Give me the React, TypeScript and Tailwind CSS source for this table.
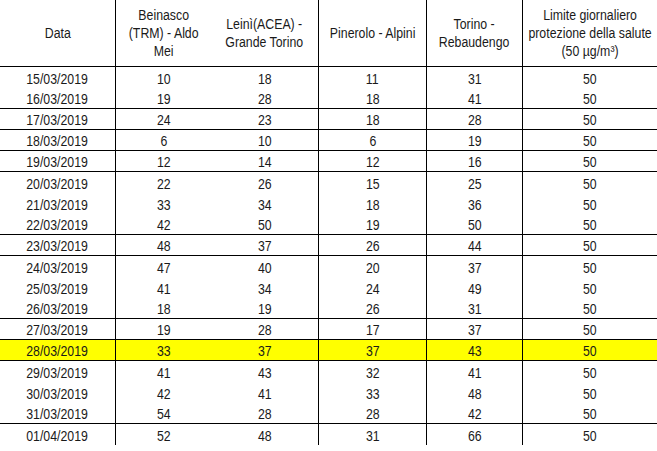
import React from "react";

// Daily PM10 readings per station, March/April 2019
type Row = {
  date: string;
  values: [number, number, number, number, number];
  line?: boolean;
  highlight?: boolean;
};

const rows: Row[] = [
  { date: "15/03/2019", values: [10, 18, 11, 31, 50] },
  { date: "16/03/2019", values: [19, 28, 18, 41, 50], line: true },
  { date: "17/03/2019", values: [24, 23, 18, 28, 50], line: true },
  { date: "18/03/2019", values: [6, 10, 6, 19, 50], line: true },
  { date: "19/03/2019", values: [12, 14, 12, 16, 50], line: true },
  { date: "20/03/2019", values: [22, 26, 15, 25, 50] },
  { date: "21/03/2019", values: [33, 34, 18, 36, 50] },
  { date: "22/03/2019", values: [42, 50, 19, 50, 50], line: true },
  { date: "23/03/2019", values: [48, 37, 26, 44, 50], line: true },
  { date: "24/03/2019", values: [47, 40, 20, 37, 50] },
  { date: "25/03/2019", values: [41, 34, 24, 49, 50] },
  { date: "26/03/2019", values: [18, 19, 26, 31, 50], line: true },
  { date: "27/03/2019", values: [19, 28, 17, 37, 50], line: true },
  { date: "28/03/2019", values: [33, 37, 37, 43, 50], line: true, highlight: true },
  { date: "29/03/2019", values: [41, 43, 32, 41, 50] },
  { date: "30/03/2019", values: [42, 41, 33, 48, 50] },
  { date: "31/03/2019", values: [54, 28, 28, 42, 50], line: true },
  { date: "01/04/2019", values: [52, 48, 31, 66, 50] },
];

const grid = "grid grid-cols-[115px_96px_107px_108px_96px_135px]";

export default function App() {
  return (
    <div
      className="w-[657px] h-[451px] bg-white text-[14px] text-[#1a1a1a] overflow-hidden"
      style={{ fontFamily: '"Liberation Sans", Arial, sans-serif' }}
    >
      <div className={`${grid} h-[67px] border-b border-black leading-[18px] text-center`}>
        <HeadCell>Data</HeadCell>
        <HeadCell border>
          Beinasco
          <br />
          (TRM) - Aldo
          <br />
          Mei
        </HeadCell>
        <HeadCell>
          Leinì(ACEA) -
          <br />
          Grande Torino
        </HeadCell>
        <HeadCell border>Pinerolo - Alpini</HeadCell>
        <HeadCell border>
          Torino -
          <br />
          Rebaudengo
        </HeadCell>
        <HeadCell border>
          Limite giornaliero
          <br />
          protezione della salute
          <br />
          (50 µg/m³)
        </HeadCell>
      </div>

      {rows.map((r) => (
        <div
          key={r.date}
          className={`${grid} h-[21px] ${r.line ? "border-b border-black" : ""} ${
            r.highlight ? "bg-[#ffff00]" : ""
          }`}
        >
          <Cell>{r.date}</Cell>
          <Cell border>{r.values[0]}</Cell>
          <Cell>{r.values[1]}</Cell>
          <Cell border>{r.values[2]}</Cell>
          <Cell border>{r.values[3]}</Cell>
          <Cell border>{r.values[4]}</Cell>
        </div>
      ))}
    </div>
  );
}

// the source image is a squeezed spreadsheet capture, so the glyphs are narrowed
function HeadCell({ children, border }: { children: React.ReactNode; border?: boolean }) {
  return (
    <div className={`flex items-center justify-center ${border ? "border-l border-black" : ""}`}>
      <span className="inline-block whitespace-nowrap scale-x-[0.88]">{children}</span>
    </div>
  );
}

function Cell({ children, border }: { children: React.ReactNode; border?: boolean }) {
  return (
    <div
      className={`flex items-center justify-center pt-[2px] leading-[18px] ${
        border ? "border-l border-black" : ""
      }`}
    >
      <span className="inline-block scale-x-[0.88]">{children}</span>
    </div>
  );
}
